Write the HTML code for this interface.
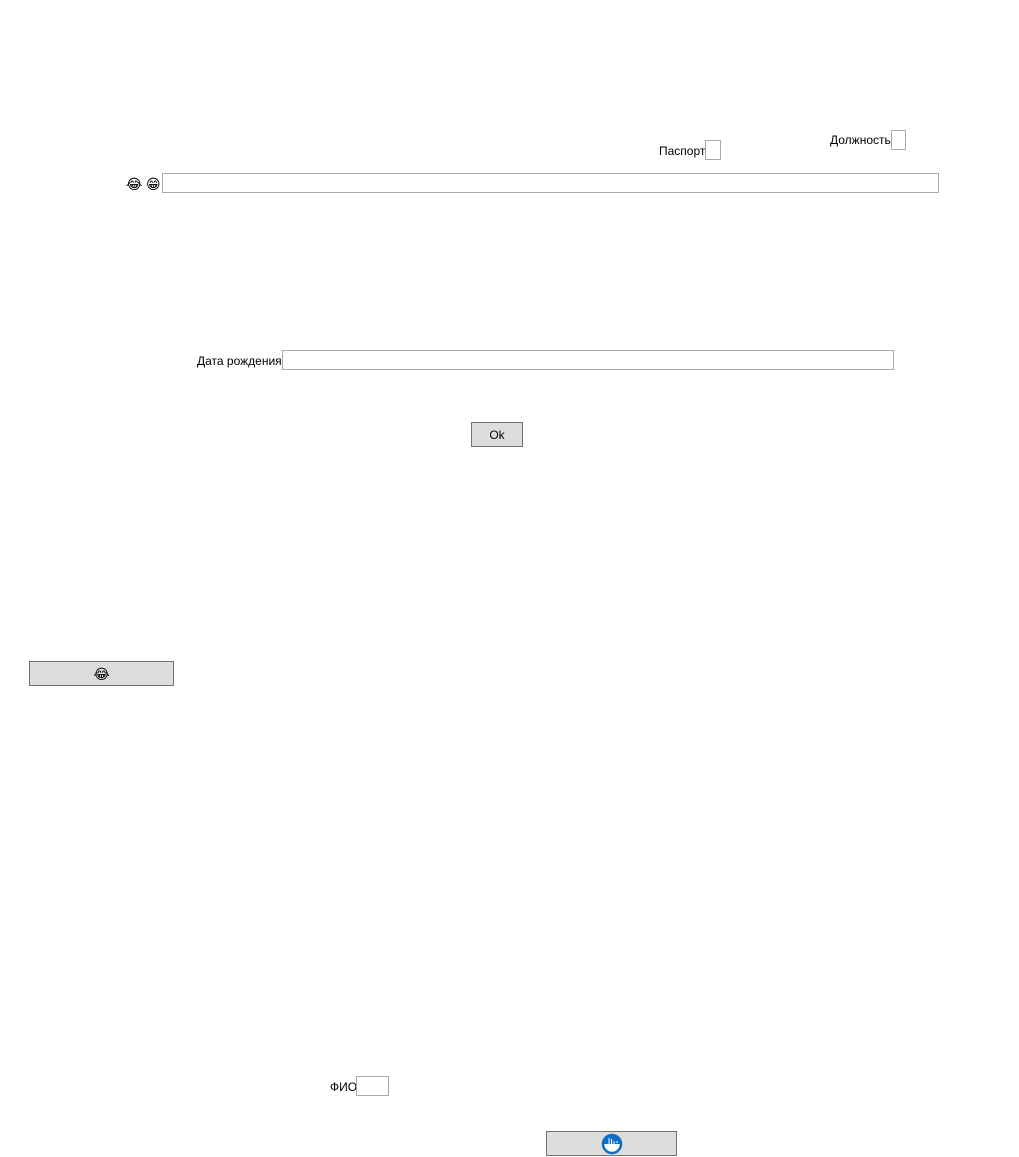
<!DOCTYPE html>
<html><head><meta charset="utf-8"><style>
body{margin:0;width:1019px;height:1157px;background:#fff;position:relative;font-family:"Liberation Sans","DejaVu Sans",sans-serif;font-size:12px;color:#000;overflow:hidden}
.a{position:absolute}
.in{position:absolute;border:1px solid #aaa;background:#fff;box-sizing:border-box}
.btn{position:absolute;border:1px solid #707070;background:#ddd;box-sizing:border-box;display:flex;align-items:center;justify-content:center;font-size:12px}
.emo{font-family:"DejaVu Sans",sans-serif;font-size:14px;line-height:14px}
</style></head><body>
<div class="a" style="left:830px;top:133px">Должность</div>
<div class="in" style="left:891px;top:130px;width:15px;height:20px"></div>
<div class="a" style="left:659px;top:144px">Паспорт</div>
<div class="in" style="left:705px;top:140px;width:16px;height:20px"></div>
<div class="a emo" style="left:126px;top:178px">😂</div>
<div class="a emo" style="left:146px;top:178px">😁</div>
<div class="in" style="left:162px;top:173px;width:777px;height:20px"></div>
<div class="a" style="left:197px;top:354px">Дата рождения</div>
<div class="in" style="left:282px;top:350px;width:612px;height:20px"></div>
<div class="btn" style="left:471px;top:422px;width:52px;height:25px">Ok</div>
<div class="btn" style="left:29px;top:661px;width:145px;height:25px"><span class="emo" style="position:relative;top:1px">😂</span></div>
<div class="a" style="left:330px;top:1080px">ФИО</div>
<div class="in" style="left:356px;top:1076px;width:33px;height:20px"></div>
<div class="btn" style="left:546px;top:1131px;width:131px;height:25px">
<svg width="22" height="22" viewBox="0 0 22 22"><circle cx="11" cy="11" r="9" fill="#fff" stroke="#0a6fc7" stroke-width="2.5"/><path d="M2 11 A9 9 0 0 1 20 11 Z" fill="#0a6fc7"/><path d="M8 5 V11 M10.5 6 V11 M13 8 V11 M16 8 V10" stroke="#fff" stroke-width="1"/></svg>
</div>
</body></html>
